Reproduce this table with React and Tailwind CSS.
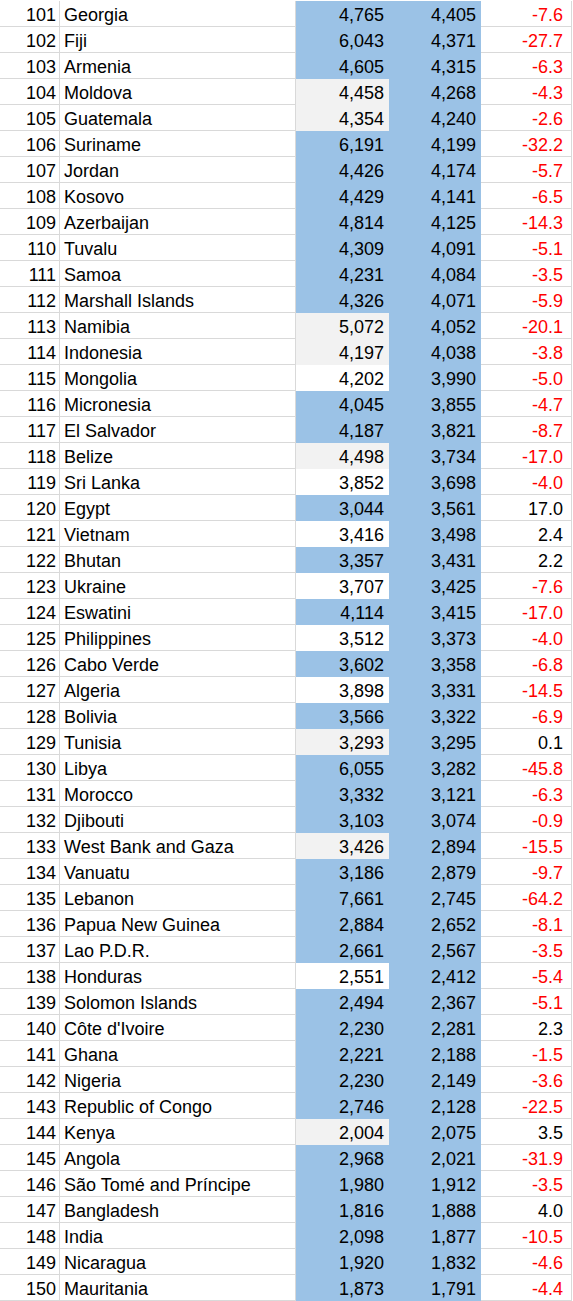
const ROWS = [
  [101, 'Georgia', '4,765', '4,405', -7.6, 'b'],
  [102, 'Fiji', '6,043', '4,371', -27.7, 'b'],
  [103, 'Armenia', '4,605', '4,315', -6.3, 'b'],
  [104, 'Moldova', '4,458', '4,268', -4.3, 'g'],
  [105, 'Guatemala', '4,354', '4,240', -2.6, 'g'],
  [106, 'Suriname', '6,191', '4,199', -32.2, 'b'],
  [107, 'Jordan', '4,426', '4,174', -5.7, 'b'],
  [108, 'Kosovo', '4,429', '4,141', -6.5, 'b'],
  [109, 'Azerbaijan', '4,814', '4,125', -14.3, 'b'],
  [110, 'Tuvalu', '4,309', '4,091', -5.1, 'b'],
  [111, 'Samoa', '4,231', '4,084', -3.5, 'b'],
  [112, 'Marshall Islands', '4,326', '4,071', -5.9, 'b'],
  [113, 'Namibia', '5,072', '4,052', -20.1, 'g'],
  [114, 'Indonesia', '4,197', '4,038', -3.8, 'g'],
  [115, 'Mongolia', '4,202', '3,990', -5.0, 'w'],
  [116, 'Micronesia', '4,045', '3,855', -4.7, 'b'],
  [117, 'El Salvador', '4,187', '3,821', -8.7, 'b'],
  [118, 'Belize', '4,498', '3,734', -17.0, 'g'],
  [119, 'Sri Lanka', '3,852', '3,698', -4.0, 'w'],
  [120, 'Egypt', '3,044', '3,561', 17.0, 'b'],
  [121, 'Vietnam', '3,416', '3,498', 2.4, 'w'],
  [122, 'Bhutan', '3,357', '3,431', 2.2, 'b'],
  [123, 'Ukraine', '3,707', '3,425', -7.6, 'w'],
  [124, 'Eswatini', '4,114', '3,415', -17.0, 'b'],
  [125, 'Philippines', '3,512', '3,373', -4.0, 'w'],
  [126, 'Cabo Verde', '3,602', '3,358', -6.8, 'b'],
  [127, 'Algeria', '3,898', '3,331', -14.5, 'w'],
  [128, 'Bolivia', '3,566', '3,322', -6.9, 'b'],
  [129, 'Tunisia', '3,293', '3,295', 0.1, 'g'],
  [130, 'Libya', '6,055', '3,282', -45.8, 'b'],
  [131, 'Morocco', '3,332', '3,121', -6.3, 'b'],
  [132, 'Djibouti', '3,103', '3,074', -0.9, 'b'],
  [133, 'West Bank and Gaza', '3,426', '2,894', -15.5, 'g'],
  [134, 'Vanuatu', '3,186', '2,879', -9.7, 'b'],
  [135, 'Lebanon', '7,661', '2,745', -64.2, 'b'],
  [136, 'Papua New Guinea', '2,884', '2,652', -8.1, 'b'],
  [137, 'Lao P.D.R.', '2,661', '2,567', -3.5, 'b'],
  [138, 'Honduras', '2,551', '2,412', -5.4, 'w'],
  [139, 'Solomon Islands', '2,494', '2,367', -5.1, 'b'],
  [140, "Côte d'Ivoire", '2,230', '2,281', 2.3, 'b'],
  [141, 'Ghana', '2,221', '2,188', -1.5, 'b'],
  [142, 'Nigeria', '2,230', '2,149', -3.6, 'b'],
  [143, 'Republic of Congo', '2,746', '2,128', -22.5, 'b'],
  [144, 'Kenya', '2,004', '2,075', 3.5, 'g'],
  [145, 'Angola', '2,968', '2,021', -31.9, 'b'],
  [146, 'São Tomé and Príncipe', '1,980', '1,912', -3.5, 'b'],
  [147, 'Bangladesh', '1,816', '1,888', 4.0, 'b'],
  [148, 'India', '2,098', '1,877', -10.5, 'b'],
  [149, 'Nicaragua', '1,920', '1,832', -4.6, 'b'],
  [150, 'Mauritania', '1,873', '1,791', -4.4, 'b'],
]

// fill for the first value column; the second is always blue
const FILL = {
  b: 'bg-[#9bc2e6] border-[#9bc2e6]',
  g: 'bg-[#f2f2f2] border-[#f2f2f2]',
  w: 'bg-white border-white',
}

const cell = 'h-[26px] leading-[29px] border-b border-r whitespace-nowrap overflow-hidden'

export default function App() {
  return (
    <div className="w-[573px] bg-white pt-px text-[18px] text-black"
         style={{ fontFamily: '"Liberation Sans", Arial, sans-serif' }}>
      {ROWS.map(([rank, name, a, b, chg, fill]) => (
        <div key={rank} className="flex">
          <div className={`${cell} w-[60px] border-[#d9d9d9] text-right pr-[3px]`}>{rank}</div>
          <div className={`${cell} w-[236px] border-[#d9d9d9] pl-[4px]`}>{name}</div>
          <div className={`${cell} w-[93px] text-right pr-[4px] ${FILL[fill]}`}>{a}</div>
          <div className={`${cell} w-[92px] text-right pr-[4px] bg-[#9bc2e6] border-[#9bc2e6]`}>{b}</div>
          <div className={`${cell} w-[91px] border-[#d9d9d9] text-right pr-[8px]
                          ${chg < 0 ? 'text-[#ff0000]' : 'text-black'}`}>
            {chg.toFixed(1)}
          </div>
        </div>
      ))}
    </div>
  )
}
